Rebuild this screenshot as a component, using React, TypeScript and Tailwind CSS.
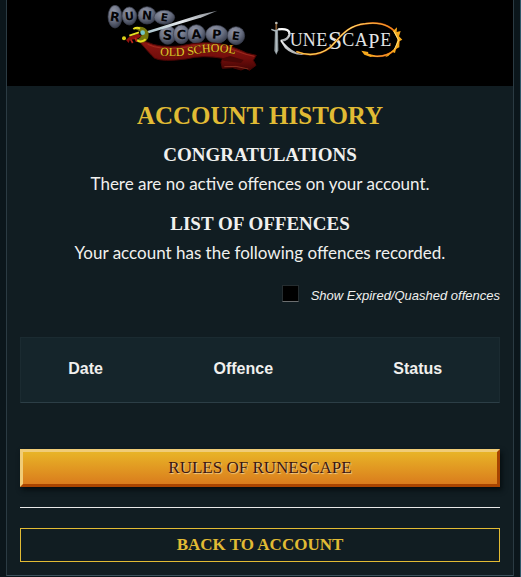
import { useState } from "react";

const stones = [
  { letter: "R", x: 47, y: 51, rx: 21, ry: 34, size: 38, tilt: 8 },
  { letter: "U", x: 90, y: 49, rx: 22, ry: 27, size: 34, tilt: -6 },
  { letter: "N", x: 143, y: 47, rx: 27, ry: 26, size: 36, tilt: 4 },
  { letter: "E", x: 195, y: 53, rx: 31, ry: 21, size: 32, tilt: 8 },
  { letter: "S", x: 205, y: 106, rx: 25, ry: 28, size: 40, tilt: 6 },
  { letter: "C", x: 246, y: 104, rx: 24, ry: 28, size: 38, tilt: 3 },
  { letter: "A", x: 291, y: 103, rx: 27, ry: 28, size: 38, tilt: -4 },
  { letter: "P", x: 352, y: 104, rx: 33, ry: 27, size: 38, tilt: 4 },
  { letter: "E", x: 410, y: 108, rx: 26, ry: 27, size: 34, tilt: 8 },
];

function OldSchoolLogo() {
  return (
    <svg viewBox="20 10 459 210" className="h-[70px] w-[153px]" role="img" aria-label="Old School RuneScape">
      <defs>
        <radialGradient id="stone" cx="40%" cy="28%" r="75%">
          <stop offset="0" stopColor="#9297a8" />
          <stop offset="0.55" stopColor="#696f81" />
          <stop offset="1" stopColor="#343948" />
        </radialGradient>
        <linearGradient id="ribbon" x1="0" y1="0" x2="0" y2="1">
          <stop offset="0" stopColor="#8f1812" />
          <stop offset="0.6" stopColor="#710d0b" />
          <stop offset="1" stopColor="#420504" />
        </linearGradient>
        <linearGradient id="steel" x1="0" y1="1" x2="1" y2="0">
          <stop offset="0" stopColor="#a9c4cc" />
          <stop offset="0.5" stopColor="#e4e8ec" />
          <stop offset="1" stopColor="#80858c" />
        </linearGradient>
        <path id="ribbonLine" d="M182 167 Q240 172 295 162 T410 163" />
      </defs>
      {stones.map((s, i) => (
        <g key={i}>
          <ellipse cx={s.x} cy={s.y} rx={s.rx} ry={s.ry} fill="url(#stone)" stroke="#3e4352" strokeWidth="2" />
          <text
            x={s.x}
            y={s.y + s.size * 0.36}
            transform={`rotate(${s.tilt} ${s.x} ${s.y})`}
            textAnchor="middle"
            fontSize={s.size}
            fontWeight="700"
            fill="#050507"
            className="font-['DejaVu_Sans',sans-serif]"
          >
            {s.letter}
          </text>
        </g>
      ))}
      <path d="M142 95 L300 45 L354 33 L308 53 L148 101 Z" fill="url(#steel)" />
      <path
        d="M118 123 L143 127 Q180 145 242 139 Q318 121 382 136 Q420 149 442 160 L471 167 L462 182 L470 197 L450 212 L440 205 L425 211 L400 204 L369 206 L365 188 L370 176 Q310 165 260 178 Q190 187 166 176 Q148 159 118 123 Z"
        fill="url(#ribbon)"
        stroke="#4a0605"
        strokeWidth="3"
      />
      <path d="M145 134 Q180 151 244 145 Q318 129 380 143 L440 164 L465 170" fill="none" stroke="#ad3526" strokeWidth="2" />
      <path d="M370 176 L393 169 L433 181 L425 190 L372 183 Z" fill="#4a0706" />
      <path d="M375 201 Q410 196 447 208" fill="none" stroke="#a7422c" strokeWidth="2" />
      <text fontSize="36" fill="#e9c52c" stroke="#4e2804" strokeWidth="2" paintOrder="stroke" className="font-['Liberation_Serif',serif]">
        <textPath href="#ribbonLine">OLD SCHOOL</textPath>
      </text>
      <path d="M80 121 L90 111 L116 102 L128 109 L111 119 L92 120 L88 130 Z" fill="#8f120e" />
      <path d="M106 86 Q134 77 145 98 Q149 116 135 125 Q121 130 112 122 Q128 116 130 103 Q126 92 106 86 Z" fill="#77780c" stroke="#77780c" strokeWidth="4" />
      <path d="M102 88 Q114 81 122 87 M119 98 L90 108 M113 122 Q126 130 139 119" fill="none" stroke="#e7df20" strokeWidth="6" />
      <path d="M94 119 L100 130 M108 114 L112 126" stroke="#bd241a" strokeWidth="5" />
      <circle cx="74" cy="116" r="6" fill="#dbce17" />
      <circle cx="130" cy="99" r="7" fill="#75c5c7" />
    </svg>
  );
}

function RuneScapeLogo() {
  return (
    <svg viewBox="30 55 405 126" className="h-[42px] w-[135px]" role="img" aria-label="RuneScape">
      <defs>
        <linearGradient id="silver" x1="0" y1="0" x2="0" y2="1">
          <stop offset="0" stopColor="#ffffff" />
          <stop offset="1" stopColor="#a4a8ab" />
        </linearGradient>
        <linearGradient id="flame" x1="0" y1="0" x2="1" y2="0">
          <stop offset="0" stopColor="#f2c64b" />
          <stop offset="0.55" stopColor="#ffdf6b" />
          <stop offset="1" stopColor="#f07910" />
        </linearGradient>
      </defs>
      <path d="M48 88 L57 88 L58 149 L52 162 L46 150 Z" fill="#8b969b" />
      <path d="M52 72 V155" stroke="#d5dddf" strokeWidth="2" />
      <path d="M37 86 L47 90 L62 85" fill="none" stroke="#abb5b8" strokeWidth="4" />
      <path d="M52 68 V87" stroke="#84592f" strokeWidth="5" />
      <circle cx="52" cy="67" r="4" fill="#b9b9b2" />
      <path d="M58 86 Q94 82 91 102 Q88 116 68 120" fill="none" stroke="url(#silver)" strokeWidth="7" />
      <path d="M66 116 Q86 143 110 154 Q123 159 141 162 Q103 167 78 143 L64 121 Z" fill="url(#silver)" />
      <g fill="#e2e4e5" fontSize="54" className="font-['Liberation_Serif',serif]">
        <text x="92" y="137">U</text>
        <text x="131" y="137">N</text>
        <text x="172" y="137">E</text>
        <text x="207" y="145" fontSize="76">S</text>
        <text x="250" y="137">C</text>
        <text x="287" y="137">A</text>
        <text x="328" y="142" fontSize="60">P</text>
        <text x="364" y="137">E</text>
      </g>
      <path d="M112 153 C158 171 189 159 214 140 C245 108 263 75 319 69 C375 61 407 83 417 109 C427 138 397 166 355 167 Q335 167 321 157" fill="none" stroke="#9c3500" strokeWidth="6" />
      <path d="M112 153 C158 171 189 159 214 140 C245 108 263 75 319 69 C375 61 407 83 417 109 C427 138 397 166 355 167 Q335 167 321 157" fill="none" stroke="url(#flame)" strokeWidth="4" />
      <path d="M307 150 L328 154 L326 161 L350 164 L335 169 L316 162 Z M402 91 L414 80 L413 94 L425 91 L420 107 L430 117 L421 122 L421 140 L411 144 L408 157 L399 153 L388 166 L378 170 L408 143 L416 116 Z" fill="#f6a91c" />
      <path d="M405 92 L419 119 L406 146" fill="none" stroke="#ffe27a" strokeWidth="3" />
    </svg>
  );
}

export default function App() {
  const [showExpired, setShowExpired] = useState(false);

  return (
    <div className="border-r border-[#31586a] bg-[#0b161b] px-[6px] pb-px">
      <main className="min-h-[576px] border-x border-b border-x-[#2b3b43] border-b-[#3d525d] bg-[#111d22] text-center text-[#f0f0ee]">
        <header className="flex h-[86px] items-start justify-center gap-[10px] bg-black pt-[3px] pr-[10px]">
          <a href="#oldschool">
            <OldSchoolLogo />
          </a>
          <a href="#runescape" className="pt-4">
            <RuneScapeLogo />
          </a>
        </header>

        <div className="px-[13px] pt-3 pb-[13px]">
          <h1 className="mb-[7px] font-['Liberation_Serif',serif] text-[25px] leading-9 font-bold text-[#e1bb34]">
            ACCOUNT HISTORY
          </h1>

          <section className="mb-3">
            <h2 className="font-['Liberation_Serif',serif] text-[19px] leading-7 font-bold">CONGRATULATIONS</h2>
            <p className="font-['Lato',sans-serif] text-[17px] leading-[29px]">
              There are no active offences on your account.
            </p>
          </section>

          <section>
            <h2 className="font-['Liberation_Serif',serif] text-[19px] leading-7 font-bold">LIST OF OFFENCES</h2>
            <p className="font-['Lato',sans-serif] text-[17px] leading-[29px]">
              Your account has the following offences recorded.
            </p>
          </section>

          <label className="mt-[18px] mb-[30px] flex h-[22px] items-center justify-end gap-3 font-['Liberation_Sans',sans-serif] text-[13px] italic">
            <input
              type="checkbox"
              checked={showExpired}
              onChange={(e) => setShowExpired(e.target.checked)}
              className="mb-[6px] size-[17px] appearance-none border border-[#252d30] border-b-[#6b6e70] bg-black checked:bg-[#e1bb34]"
            />
            Show Expired/Quashed offences
          </label>

          <table className="w-full table-fixed border-separate border-spacing-0 border border-[#1b2b31] border-b-[#2c3e46] bg-[#15252b] font-['Liberation_Sans',sans-serif] text-base">
            <thead>
              <tr className="h-16">
                <th scope="col" className="w-[27%] p-0 pb-[2px]">Date</th>
                <th scope="col" className="w-[39%] p-0 pb-[2px]">Offence</th>
                <th scope="col" className="p-0 pb-[2px]">Status</th>
              </tr>
            </thead>
          </table>

          <button
            type="button"
            className="mt-[46px] block h-[38px] w-full border-[3px] border-t-[#f0cc77] border-r-[#a84400] border-b-[#a84400] border-l-[#f0cc77] bg-linear-to-b from-[#e8b427] to-[#d97c1d] font-['Liberation_Serif',serif] text-[17px] leading-8 text-[#3a1711] shadow-[2px_3px_5px_#050d10] [text-shadow:1px_1px_1px_#f3ce91]"
          >
            RULES OF RUNESCAPE
          </button>

          <hr className="my-5 border-[#e8e8e8]" />

          <a
            href="#account"
            className="block border border-[#e1bb34] font-['Liberation_Serif',serif] text-[17px] leading-8 font-bold text-[#e1bb34]"
          >
            BACK TO ACCOUNT
          </a>
        </div>
      </main>
    </div>
  );
}
